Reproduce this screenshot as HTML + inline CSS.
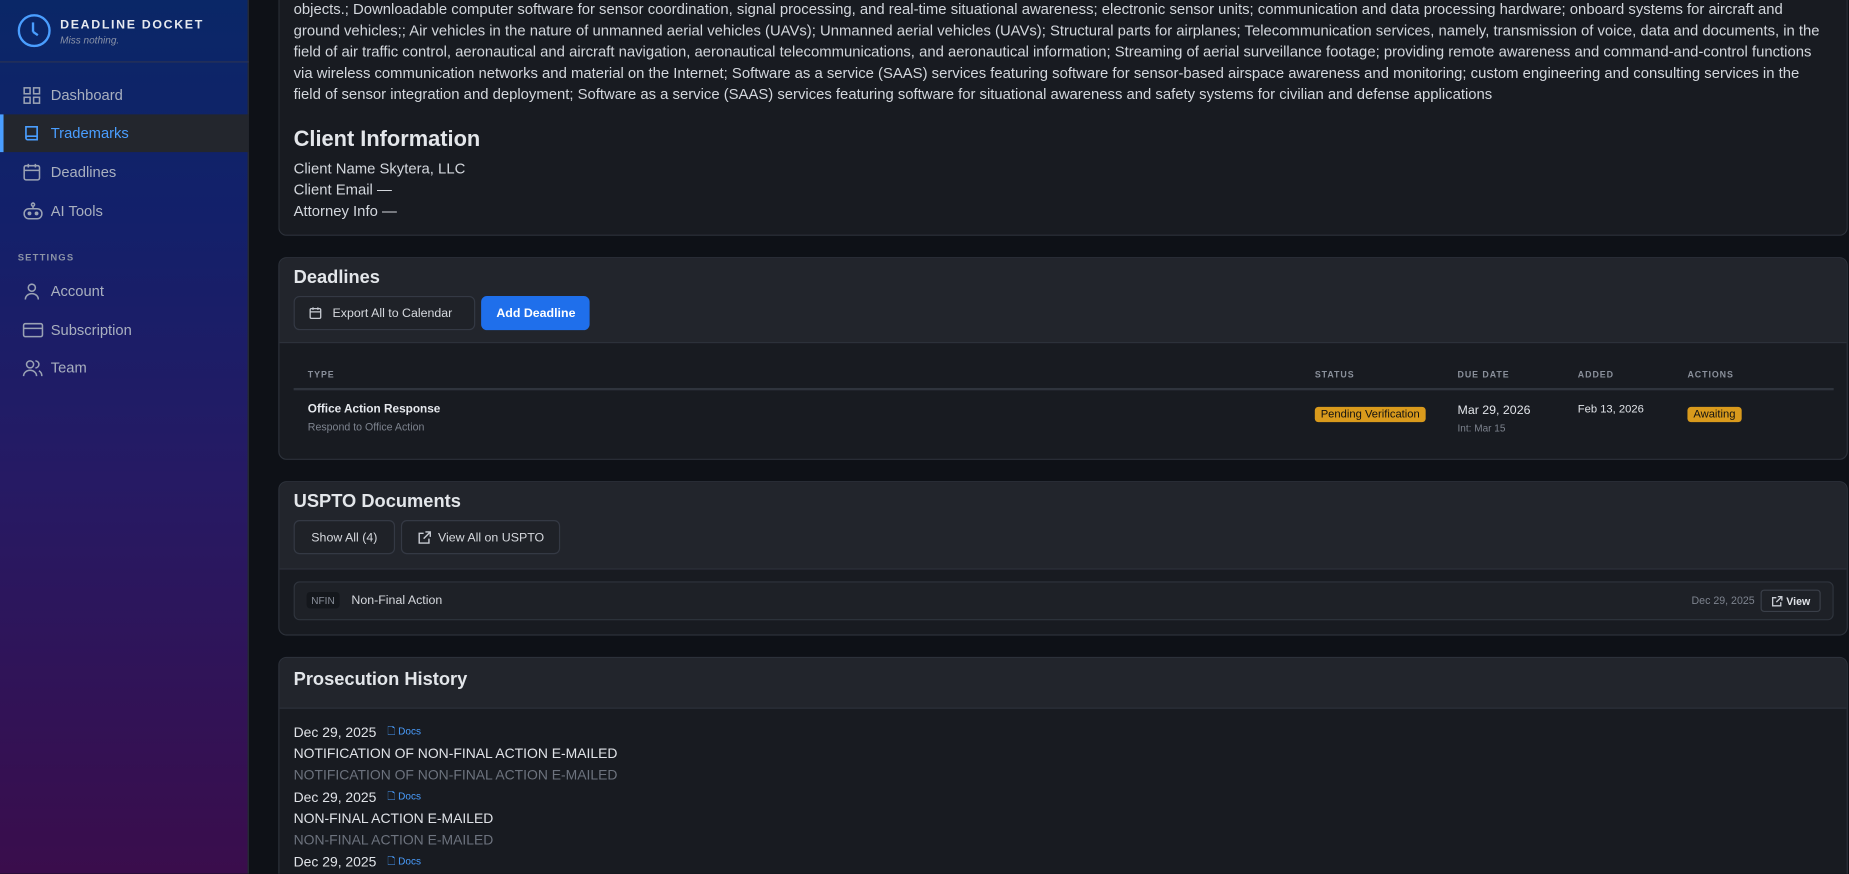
<!DOCTYPE html>
<html><head><meta charset="utf-8"><style>
*{box-sizing:border-box;margin:0;padding:0}
html,body{width:1849px;height:874px;overflow:hidden;background:#0e1117}
#w{position:absolute;left:0;top:0;width:1568px;height:741px;transform:scale(1.17921);transform-origin:0 0;font-family:"Liberation Sans",sans-serif;color:#d6d9de;background:#0e1117;overflow:hidden;white-space:nowrap}
.sb{position:absolute;left:0;top:0;width:211px;height:741px;background:linear-gradient(180deg,#0a2767 0%,#13206a 25%,#261a64 55%,#3a0d4c 100%);border-right:1px solid #2a2f3a}
.logo{position:absolute;left:15px;top:12px;width:28px;height:28px;border:2.5px solid #4a9eff;border-radius:50%}
.logo:before{content:"";position:absolute;left:10px;top:5px;width:2px;height:8px;background:#4a9eff}
.logo:after{content:"";position:absolute;left:11px;top:12px;width:5px;height:2px;background:#4a9eff;transform:rotate(35deg);transform-origin:left}
.t1{position:absolute;left:51px;top:15px;font-size:10.5px;font-weight:bold;letter-spacing:1.4px;color:#e6e9ef}
.t2{position:absolute;left:51px;top:29px;font-size:8.5px;font-style:italic;color:#8a93a8}
.div{position:absolute;left:0;top:52px;width:211px;height:1px;background:#2a3354}
.nav{position:absolute;left:0;width:211px;height:32px;font-size:12.5px;color:#a9b0bf;display:flex;align-items:center;padding-left:43px}
.nav svg{position:absolute;left:19px;top:8px}
.nav.act{background:#23262d;color:#4a9eff;border-left:3px solid #4a9eff;padding-left:40px}
.nav.act svg{left:16px}
.set{position:absolute;left:15px;top:214px;font-size:8px;font-weight:bold;letter-spacing:1px;color:#8c93a6}
.card{position:absolute;left:236px;width:1331px;border:1px solid #2c313a;border-radius:7px;background:#181b21;overflow:hidden}
.hd{background:#22252c;border-bottom:1px solid #2c313a;padding:8px 12px}
.hd h2{font-size:15.5px;font-weight:bold;color:#e3e6ea;margin-bottom:6px;line-height:18px}
.btn{display:inline-flex;align-items:center;height:29px;padding:0 12px;border:1px solid #343944;border-radius:5px;font-size:10.5px;color:#d6d9de;background:#1f2228;vertical-align:top;white-space:nowrap}
.blue{background:#1f6feb;border-color:#1f6feb;color:#fff;font-weight:bold}
.txt{font-size:12.6px;line-height:18px;white-space:nowrap;color:#d3d7dd}
.th{position:absolute;top:22px;font-size:7.5px;font-weight:bold;letter-spacing:.8px;color:#8a909b}
.badge{display:inline-block;background:#d99a1c;color:#111;font-size:9.5px;padding:1px 5px;border-radius:3px}
.docs{color:#4a9eff;font-size:8.5px;margin-left:6px;vertical-align:2px}
</style></head><body><div id="w">
<div class="sb">
<div class="logo"></div>
<div class="t1">DEADLINE DOCKET</div>
<div class="t2">Miss nothing.</div>
<div class="div"></div>
<div class="nav" style="top:65px"><svg width="16" height="16" viewBox="0 0 16 16" fill="none" stroke="#9aa2b4" stroke-width="1.3"><rect x="1.5" y="1.5" width="5" height="5"/><rect x="9.5" y="1.5" width="5" height="5"/><rect x="1.5" y="9.5" width="5" height="5"/><rect x="9.5" y="9.5" width="5" height="5"/></svg>Dashboard</div>
<div class="nav act" style="top:97px"><svg width="16" height="16" viewBox="0 0 16 16" fill="none" stroke="#4a9eff" stroke-width="1.4"><path d="M3 2.5h9.5v11H4.5A1.5 1.5 0 0 1 3 12z M3 12a1.5 1.5 0 0 1 1.5-1.5h8"/></svg>Trademarks</div>
<div class="nav" style="top:130px"><svg width="16" height="16" viewBox="0 0 16 16" fill="none" stroke="#9aa2b4" stroke-width="1.3"><rect x="1.5" y="2.5" width="13" height="12" rx="1.5"/><path d="M1.5 6.5h13M5 1v3M11 1v3"/></svg>Deadlines</div>
<div class="nav" style="top:163px"><svg width="18" height="16" viewBox="0 0 18 16" fill="none" stroke="#9aa2b4" stroke-width="1.3"><rect x="1.5" y="6" width="15" height="8.5" rx="4"/><circle cx="9" cy="2.5" r="1.3"/><path d="M9 4v2"/><circle cx="6" cy="10" r="1" fill="#9aa2b4"/><circle cx="12" cy="10" r="1" fill="#9aa2b4"/></svg>AI Tools</div>
<div class="set">SETTINGS</div>
<div class="nav" style="top:231px"><svg width="16" height="16" viewBox="0 0 16 16" fill="none" stroke="#9aa2b4" stroke-width="1.3"><circle cx="8" cy="5" r="3"/><path d="M2.5 15c0-3 2.5-5 5.5-5s5.5 2 5.5 5"/></svg>Account</div>
<div class="nav" style="top:264px"><svg width="18" height="16" viewBox="0 0 18 16" fill="none" stroke="#9aa2b4" stroke-width="1.3"><rect x="1" y="2.5" width="16" height="11" rx="1.5"/><path d="M1 6.5h16"/></svg>Subscription</div>
<div class="nav" style="top:296px"><svg width="18" height="16" viewBox="0 0 18 16" fill="none" stroke="#9aa2b4" stroke-width="1.3"><circle cx="6.5" cy="5" r="3"/><path d="M1 15c0-3 2.5-5 5.5-5s5.5 2 5.5 5M11 2a3 3 0 0 1 0 6M14 10.5c1.5.8 2.5 2.5 2.5 4.5"/></svg>Team</div>
</div>

<div class="card" style="top:-10px;height:210px;border-top:none;padding:9px 12px">
<div class="txt">objects.; Downloadable computer software for sensor coordination, signal processing, and real-time situational awareness; electronic sensor units; communication and data processing hardware; onboard systems for aircraft and<br>ground vehicles;; Air vehicles in the nature of unmanned aerial vehicles (UAVs); Unmanned aerial vehicles (UAVs); Structural parts for airplanes; Telecommunication services, namely, transmission of voice, data and documents, in the<br>field of air traffic control, aeronautical and aircraft navigation, aeronautical telecommunications, and aeronautical information; Streaming of aerial surveillance footage; providing remote awareness and command-and-control functions<br>via wireless communication networks and material on the Internet; Software as a service (SAAS) services featuring software for sensor-based airspace awareness and monitoring; custom engineering and consulting services in the<br>field of sensor integration and deployment; Software as a service (SAAS) services featuring software for situational awareness and safety systems for civilian and defense applications</div>
<div style="font-size:18.5px;font-weight:bold;color:#e3e6ea;margin-top:18px;margin-bottom:5px;line-height:22px">Client Information</div>
<div class="txt">Client Name Skytera, LLC<br>Client Email —<br>Attorney Info —</div>
</div>

<div class="card" style="top:218px;height:172px">
<div class="hd" style="height:72px">
<h2>Deadlines</h2>
<span class="btn" style="width:154px"><svg width="11" height="11" viewBox="0 0 16 16" fill="none" stroke="#c8ccd3" stroke-width="1.6" style="margin-right:9px"><rect x="1.5" y="2.5" width="13" height="12" rx="1.5"/><path d="M1.5 6.5h13M5 1v3M11 1v3"/></svg>Export All to Calendar</span>
<span class="btn blue" style="width:92px;margin-left:1px;justify-content:center;padding:0">Add Deadline</span>
</div>
<div style="position:relative;margin:0 12px">
<div class="th" style="left:12px">TYPE</div>
<div class="th" style="left:866px">STATUS</div>
<div class="th" style="left:987px">DUE DATE</div>
<div class="th" style="left:1089px">ADDED</div>
<div class="th" style="left:1182px">ACTIONS</div>
<div style="position:absolute;left:0;top:38px;width:1306px;height:2px;background:#2f343d"></div>
<div style="position:absolute;left:12px;top:51px;font-size:10px;font-weight:bold;color:#e6e9ee">Office Action Response</div>
<div style="position:absolute;left:12px;top:66px;font-size:9px;color:#7d838e">Respond to Office Action</div>
<div style="position:absolute;left:866px;top:50px"><span class="badge">Pending Verification</span></div>
<div style="position:absolute;left:987px;top:51px;font-size:10.5px;color:#e0e3e8">Mar 29, 2026</div>
<div style="position:absolute;left:987px;top:67px;font-size:8.5px;color:#7d838e">Int: Mar 15</div>
<div style="position:absolute;left:1089px;top:51px;font-size:9.5px;color:#e0e3e8">Feb 13, 2026</div>
<div style="position:absolute;left:1182px;top:50px"><span class="badge">Awaiting</span></div>
</div>
</div>

<div class="card" style="top:408px;height:131px">
<div class="hd" style="height:74px">
<h2>USPTO Documents</h2>
<span class="btn" style="width:86px;justify-content:center;padding:0">Show All (4)</span>
<span class="btn" style="width:135px;margin-left:1px;justify-content:center;padding:0"><svg width="12" height="12" viewBox="0 0 16 16" fill="none" stroke="#c8ccd3" stroke-width="1.6" style="margin-right:5px"><path d="M13 9v5H2V3h5M9 1.5h5.5V7M14.5 1.5 7 9"/></svg>View All on USPTO</span>
</div>
<div style="position:absolute;left:12px;top:84px;width:1306px;height:33px;border:1px solid #2f343d;border-radius:5px;background:#1e2127">
<span style="position:absolute;left:10px;top:8px;background:#14171c;color:#8a909b;font-size:8.5px;padding:2px 4px;border-radius:3px">NFIN</span>
<span style="position:absolute;left:48px;top:9px;font-size:10.5px;color:#d6d9de">Non-Final Action</span>
<span style="position:absolute;right:66px;top:10px;font-size:9px;color:#7d838e">Dec 29, 2025</span>
<span style="position:absolute;right:10px;top:6px;height:19px;width:51px;border:1px solid #3a3f49;border-radius:3px;font-size:9px;color:#e0e3e8;display:flex;align-items:center;justify-content:center;font-weight:bold"><svg width="10" height="10" viewBox="0 0 16 16" fill="none" stroke="#c8ccd3" stroke-width="1.8" style="margin-right:3px"><path d="M13 9v5H2V3h5M9 1.5h5.5V7M14.5 1.5 7 9"/></svg>View</span>
</div>
</div>

<div class="card" style="top:557px;height:200px">
<div class="hd" style="height:43px;padding-top:10px"><h2>Prosecution History</h2></div>
<div style="padding:10px 12px;font-size:11.8px;line-height:18px;color:#e0e3e8;white-space:nowrap">
<div>Dec 29, 2025 <span class="docs">🗋 Docs</span></div>
<div>NOTIFICATION OF NON-FINAL ACTION E-MAILED</div>
<div style="color:#6d737e">NOTIFICATION OF NON-FINAL ACTION E-MAILED</div>
<div>Dec 29, 2025 <span class="docs">🗋 Docs</span></div>
<div>NON-FINAL ACTION E-MAILED</div>
<div style="color:#6d737e">NON-FINAL ACTION E-MAILED</div>
<div>Dec 29, 2025 <span class="docs">🗋 Docs</span></div>
</div>
</div>
</div></body></html>
